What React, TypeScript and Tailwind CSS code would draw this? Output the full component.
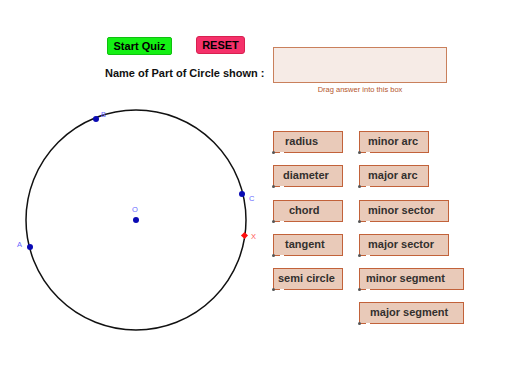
import React from "react";

const cards = [
  { label: "radius", col: 1, w: "w-[70px]", pl: "pl-[11px]" },
  { label: "minor arc", col: 2, w: "w-[70px]", pl: "pl-[8px]" },
  { label: "diameter", col: 1, w: "w-[70px]", pl: "pl-[9px]" },
  { label: "major arc", col: 2, w: "w-[70px]", pl: "pl-[8px]" },
  { label: "chord", col: 1, w: "w-[70px]", pl: "pl-[15px]" },
  { label: "minor sector", col: 2, w: "w-[90px]", pl: "pl-[8px]" },
  { label: "tangent", col: 1, w: "w-[70px]", pl: "pl-[11px]" },
  { label: "major sector", col: 2, w: "w-[90px]", pl: "pl-[8px]" },
  { label: "semi circle", col: 1, w: "w-[70px]", pl: "pl-[4px]" },
  { label: "minor segment", col: 2, w: "w-[105px]", pl: "pl-[6px]" },
  { label: "", col: 1, w: "", pl: "" },
  { label: "major segment", col: 2, w: "w-[105px]", pl: "pl-[10px]" },
];

function Card({ label, w, pl }: { label: string; w: string; pl: string }) {
  if (!label) return <div />;
  return (
    <div
      className={`relative h-[22px] ${w} ${pl} flex items-center border-[1.5px] border-[#c2623a] bg-[#e9cab9] text-[11px] font-bold text-[#33302e] leading-none`}
    >
      <span className="-mt-[1px]">{label}</span>
      {/* little anchor point GeoGebra leaves at the corner */}
      <span className="absolute -left-[2px] -bottom-[2px] h-[3px] w-[3px] rounded-full bg-[#555]" />
      <span className="absolute left-[6px] -bottom-[1.5px] h-[1.5px] w-[4px] bg-white" />
    </div>
  );
}

function CircleDrawing() {
  return (
    <svg width="273" height="240" viewBox="0 0 273 240" className="block">
      <circle cx="136" cy="120" r="110" fill="none" stroke="#111" strokeWidth="1.5" />
      {/* points */}
      <circle cx="30" cy="147" r="3" fill="#0a0ab4" />
      <circle cx="96" cy="19" r="3" fill="#0a0ab4" />
      <circle cx="242" cy="94" r="3" fill="#0a0ab4" />
      <circle cx="136" cy="120" r="3" fill="#0a0ab4" />
      <rect x="242" y="133" width="5" height="5" fill="#ff1010" transform="rotate(45 244.5 135.5)" />
      {/* labels */}
      <text x="17" y="147" fontSize="7.5" fill="#6666ff" fontFamily="Liberation Sans, sans-serif">A</text>
      <text x="101" y="17" fontSize="7.5" fill="#6666ff" fontFamily="Liberation Sans, sans-serif">B</text>
      <text x="249" y="101" fontSize="7.5" fill="#6666ff" fontFamily="Liberation Sans, sans-serif">C</text>
      <text x="132" y="112" fontSize="7.5" fill="#6666ff" fontFamily="Liberation Sans, sans-serif">O</text>
      <text x="251" y="139" fontSize="7.5" fill="#ff5555" fontFamily="Liberation Sans, sans-serif">X</text>
    </svg>
  );
}

export default function App() {
  return (
    <div className="w-[512px] h-[367px] bg-white overflow-hidden font-['Liberation_Sans',Arial,sans-serif]">
      <div className="flex h-[100px] pt-[36px]">
        <div className="w-[273px] pl-[105px]">
          <div className="flex items-start gap-[24px] pl-[2px]">
            <button className="h-[18px] w-[65px] mt-[1px] rounded-[2px] border border-[#10c010] bg-[#14f014] text-[11px] font-bold text-black leading-none">
              Start Quiz
            </button>
            <button className="h-[18px] w-[49px] rounded-[3px] border border-[#d82050] bg-[#f5316a] text-[11px] font-bold text-black leading-none">
              RESET
            </button>
          </div>
          <div className="mt-[13px] text-[11px] font-bold text-[#111] leading-none">
            Name of Part of Circle shown :
          </div>
        </div>
        <div className="pt-[11px] flex flex-col items-center w-[174px]">
          <div className="h-[36px] w-[174px] border-[1.5px] border-[#c9805c] bg-[#f6ebe6]" />
          <div className="mt-[3px] text-[7.5px] text-[#b4562d] leading-none">
            Drag answer into this box
          </div>
        </div>
      </div>
      <div className="flex">
        <CircleDrawing />
        <div className="pt-[31px]">
          <div className="grid grid-cols-[86px_auto] gap-y-[12.3px] justify-items-start">
            {cards.map((c, i) => (
              <Card key={i} label={c.label} w={c.w} pl={c.pl} />
            ))}
          </div>
        </div>
      </div>
    </div>
  );
}
